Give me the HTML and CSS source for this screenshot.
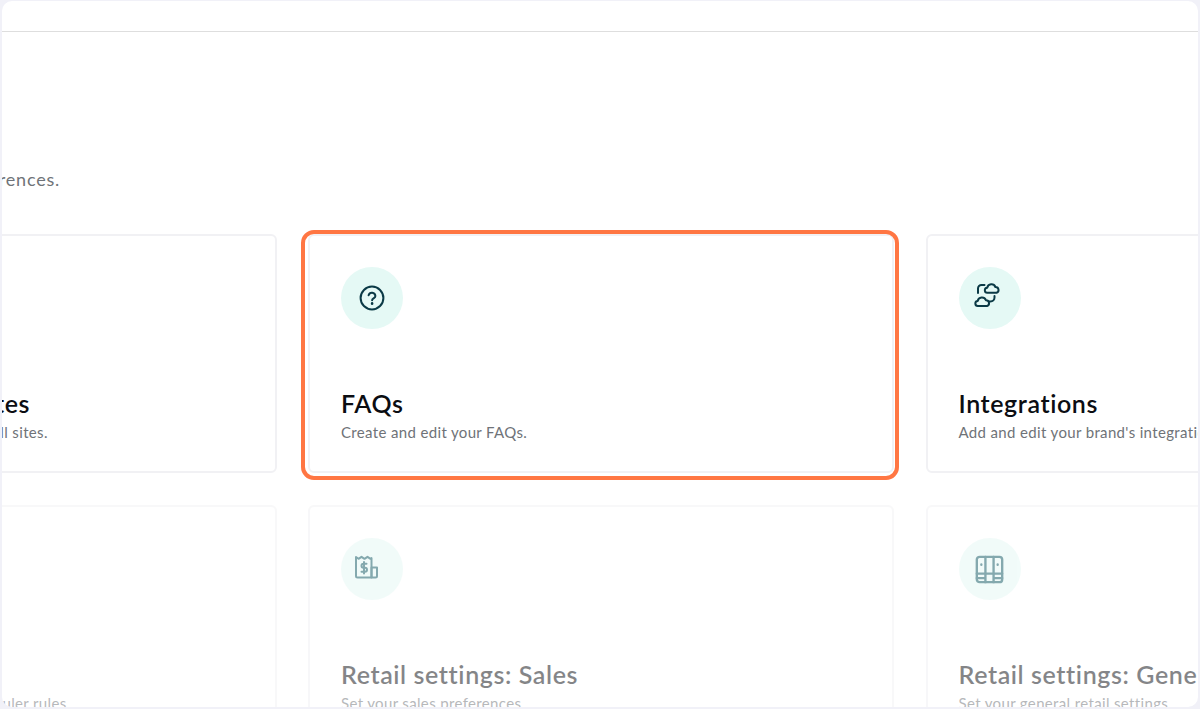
FILE: index.html
```html
<!DOCTYPE html>
<html>
<head>
<meta http-equiv="Content-Type" content="text/html; charset=utf-8" />
<title>Settings</title>
<link rel="stylesheet" href="styles.css">
</head>

<body>
	<div class="panel">
		<div class="top-bar"></div>

		<div class="content">
			<p class="intro">Manage your brand's settings and preferences.</p>

			<div class="card-grid">
				<div class="card">
					<div class="card-icon"></div>
					<h3>Global settings for all sites</h3>
					<p>Create and edit default settings across all sites.</p>
				</div>

				<div class="card">
					<div class="card-icon">
						<svg viewBox="0 0 32 32"><circle cx="16" cy="16" r="11.4"/><path d="M12.600 13.200a3.500 3.500 0 0 1 6.800 .8c0 2.300-3.300 2.500-3.300 4.200"/><path class="dot" d="M16.100 21.400v.3"/></svg>
					</div>
					<h3>FAQs</h3>
					<p>Create and edit your FAQs.</p>
					<div class="highlight"></div>
				</div>

				<div class="card">
					<div class="card-icon">
						<svg viewBox="0 0 32 32"><path d="M13.500 10.800a2.500 2.500 0 0 1 -.3-5a4.300 4.300 0 0 1 8.200 -.8a3 3 0 0 1 1.200 5.800z"/><path d="M4 24a2.500 2.500 0 0 1 -.3-5a4.300 4.300 0 0 1 8.200 -.8a3 3 0 0 1 1.200 5.800z"/><path d="M10.500 3h-3a3.500 3.500 0 0 0 -3.500 3.500v4.500"/><path d="M20.500 14v1.500a4 4 0 0 1 -4 4h-1.500"/></svg>
					</div>
					<h3>Integrations</h3>
					<p>Add and edit your brand's integrations.</p>
				</div>

				<div class="card faded">
					<div class="card-icon"></div>
					<h3>Scheduler</h3>
					<p>Create and update all your default scheduler rules.</p>
				</div>

				<div class="card faded">
					<div class="card-icon">
						<svg class="shift-receipt" viewBox="0 0 32 32"><path d="M18.500 24.500h-14a1.500 1.500 0 0 1 -1.500-1.500v-19l2.500 1.800 3-2 3 2 3-2 3 2 1 -.8v19.500z"/><path d="M18.500 14.500h5.500v8.500a1.500 1.500 0 0 1 -1.500 1.500h-4z"/><path d="M13.500 10.800h-3a1.700 1.700 0 0 0 0 4h1.500a1.700 1.700 0 0 1 0 4h-3.500M11 9v11.500"/></svg>
					</div>
					<h3>Retail settings: Sales</h3>
					<p>Set your sales preferences.</p>
				</div>

				<div class="card faded">
					<div class="card-icon">
						<svg class="large-icon" viewBox="0 0 32 32"><rect x="2" y="2" width="28" height="28" rx="3"/><path d="M11.500 2v28M20.500 2v28M2 20.500h28M2 25.500h9.500M20.500 25.500h9.500"/><path class="dot" d="M7 10.500v.2M25 10.500v.2"/></svg>
					</div>
					<h3>Retail settings: General</h3>
					<p>Set your general retail settings.</p>
				</div>
			</div>
		</div>
	</div>
</body>
</html>
```

FILE: styles.css
```css
*{
	padding: 0;
	margin: 0;
	box-sizing: border-box;
}
body{
	height: 709px;
	padding: 1px 2px 2px;
	background: #f1f1f8;
	font-family: "Lato", "Noto Sans", sans-serif;
	overflow: hidden;
}
.panel{
	height: 706px;
	background: #fff;
	border-radius: 10px;
	overflow: hidden;
}
.top-bar{
	height: 31px;
	border-bottom: 1px solid #dedede;
}
.content{
	margin-left: -311.5px;
	padding-top: 137px;
}
.intro{
	margin-left: -32px;
	height: 20px;
	font-size: 18px;
	letter-spacing: .8px;
	line-height: 20px;
	color: #6f7378;
	white-space: nowrap;
}
.card-grid{
	display: grid;
	grid-template-columns: repeat(3, 586px);
	grid-auto-rows: 239px;
	gap: 32px 31.5px;
	margin-top: 45px;
}
.card{
	position: relative;
	display: flex;
	flex-direction: column;
	padding: 31px 31px 29px;
	border: 2px solid #f1f1f4;
	border-radius: 6px;
}
.card-icon{
	display: flex;
	align-items: center;
	justify-content: center;
	width: 62px;
	height: 62px;
	border-radius: 50%;
	background: #e5f9f5;
}
.card-icon svg{
	width: 32px;
	height: 32px;
	fill: none;
	stroke: #0b3a46;
	stroke-width: 2;
	stroke-linecap: round;
	stroke-linejoin: round;
}
.card-icon .dot{
	stroke-width: 2.6;
}
.card-icon .shift-receipt{
	margin-left: -6px;
}
.card-icon .large-icon{
	width: 29px;
	height: 29px;
	stroke-width: 2.6;
}
.card h3{
	margin-top: auto;
	font-size: 25px;
	font-weight: 600;
	letter-spacing: .6px;
	line-height: 30px;
	color: #0b0d12;
	white-space: nowrap;
}
.card p{
	margin-top: 4px;
	font-size: 15px;
	letter-spacing: .35px;
	line-height: 20px;
	color: #6f7378;
	white-space: nowrap;
}
.card.faded{
	opacity: .5;
}
.card.faded svg{
	stroke: #0b5560;
}
.highlight{
	position: absolute;
	top: -6px;
	left: -9px;
	right: -7px;
	bottom: -9px;
	border: 4px solid #ff7643;
	border-radius: 13px;
}
```
